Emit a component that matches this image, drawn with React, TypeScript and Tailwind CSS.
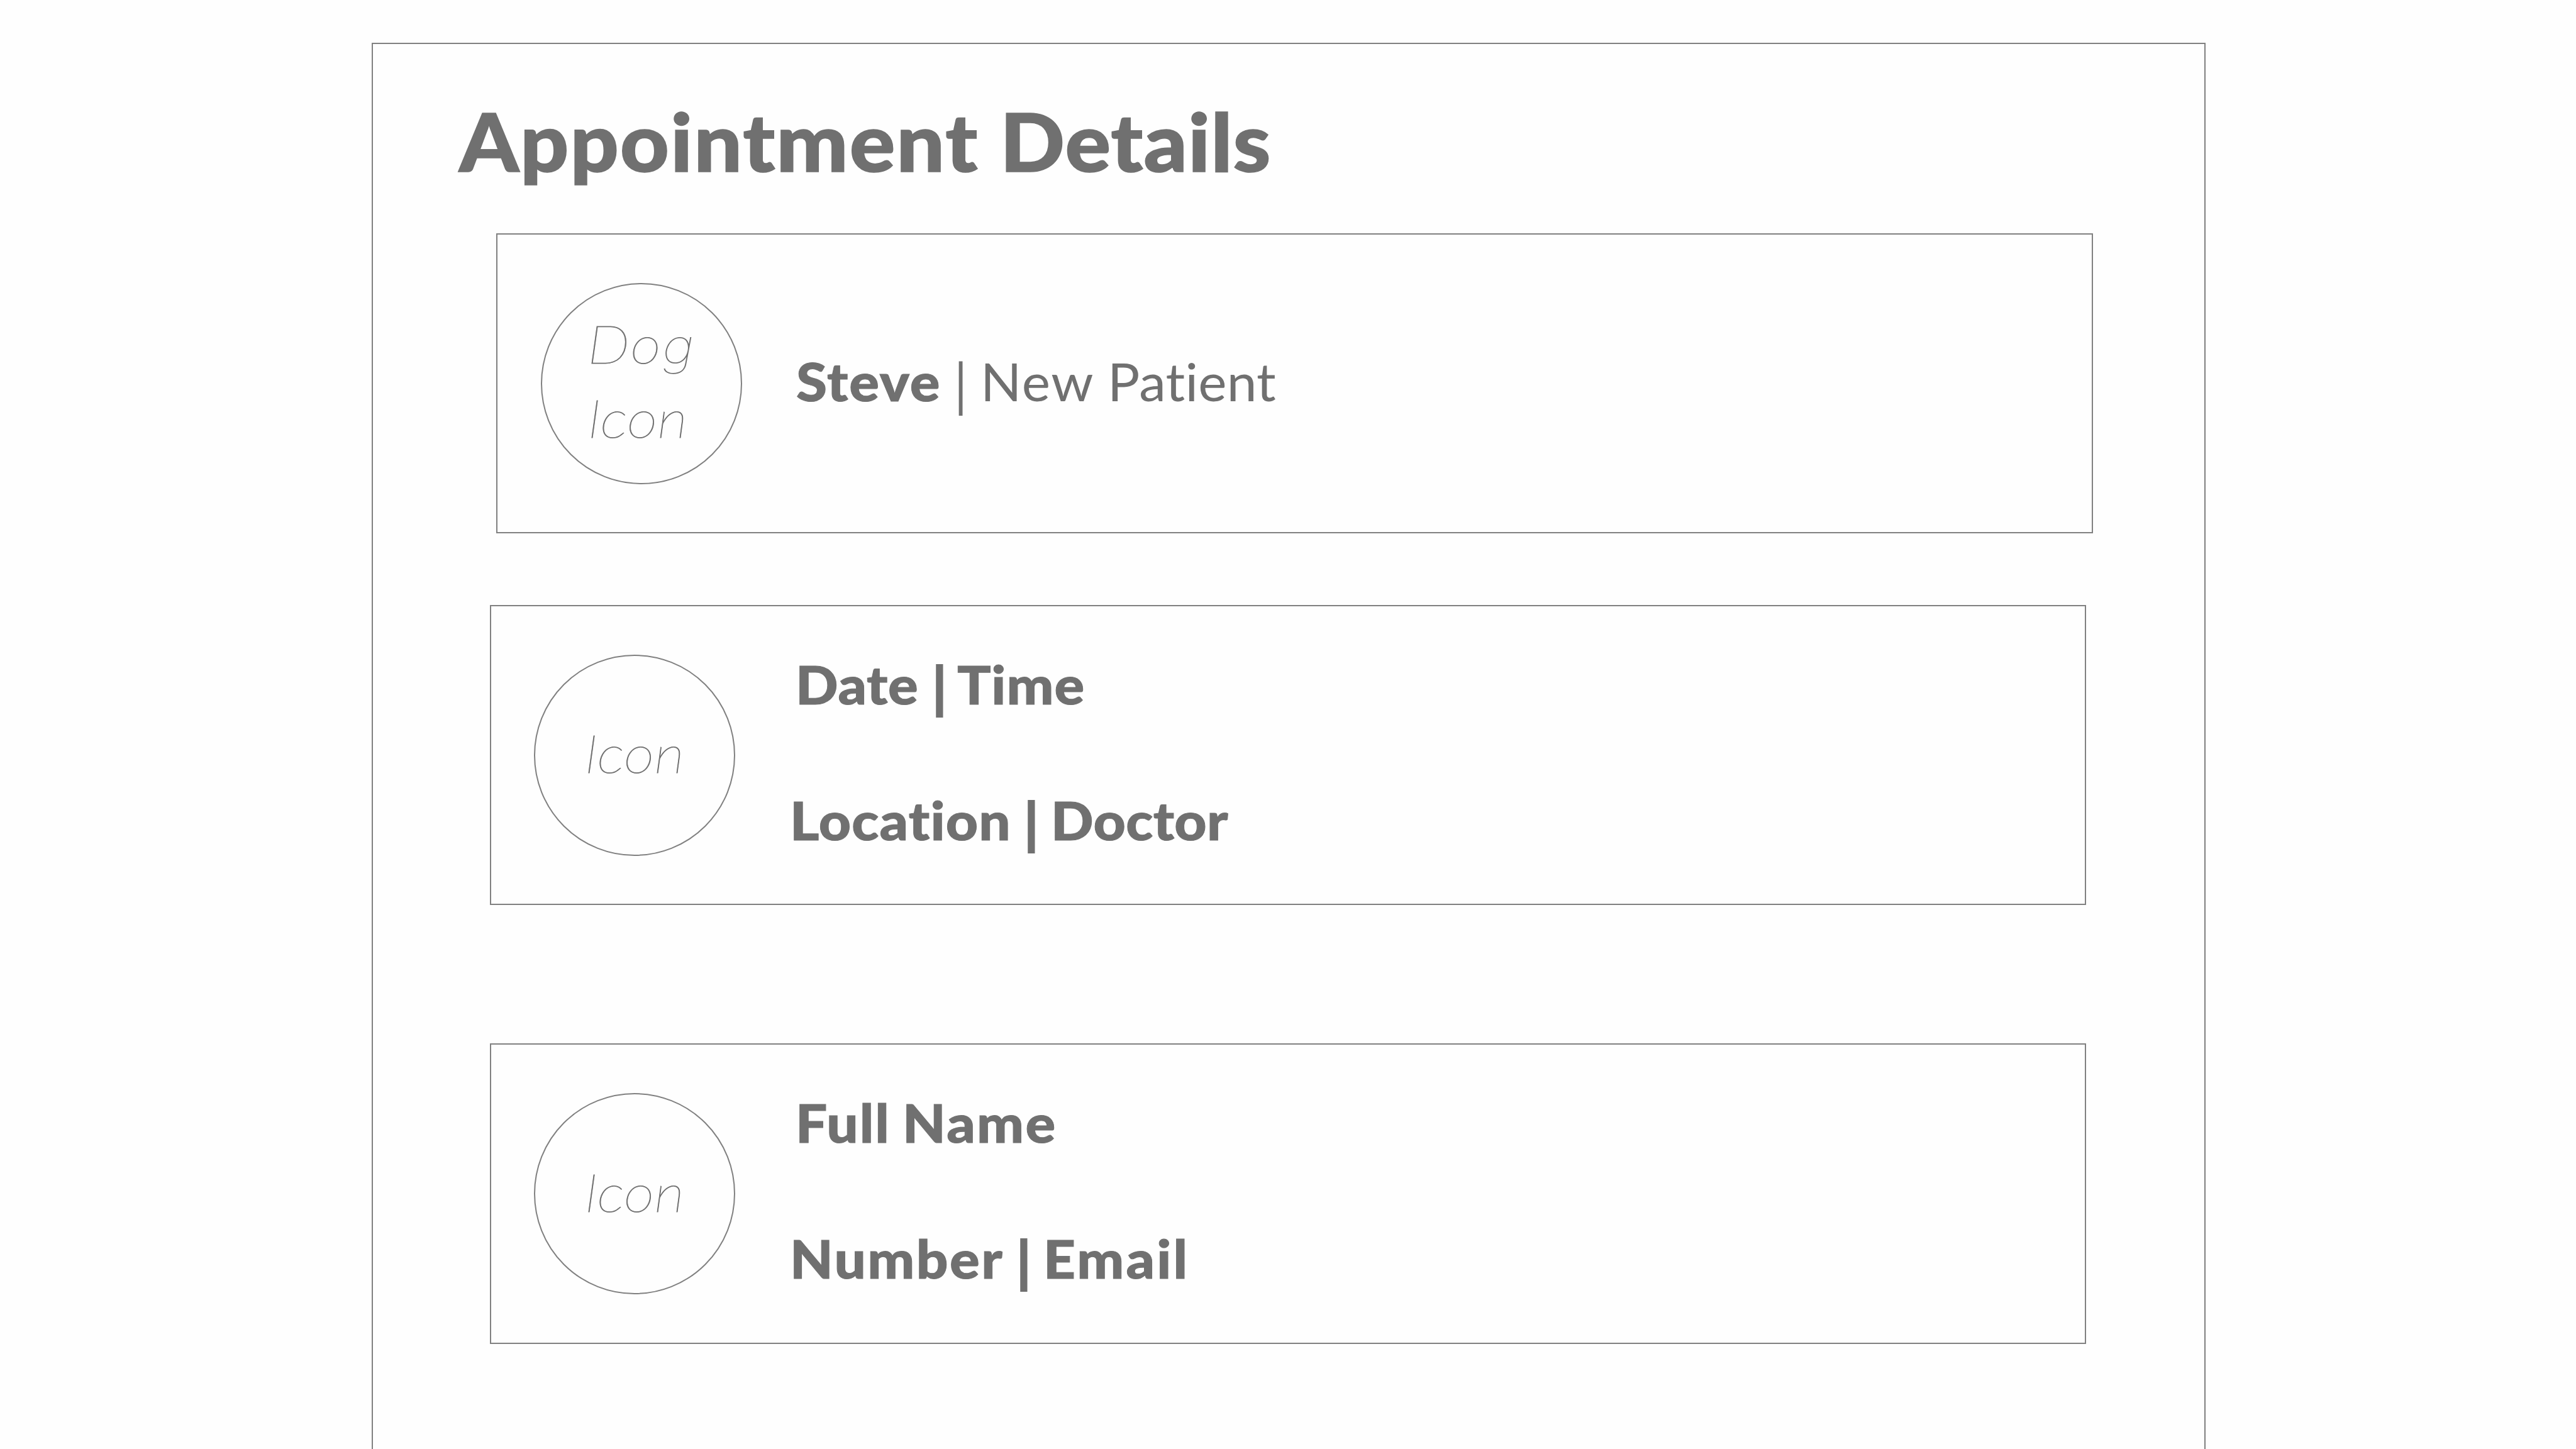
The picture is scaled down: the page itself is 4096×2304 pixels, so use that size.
import type { ReactNode } from "react";
import clsx from "clsx";

function Divider({ light, className }: { light?: boolean; className: string }) {
  return (
    <span
      className={clsx(
        "shrink-0 self-start font-['Open_Sans',sans-serif] text-[86px] leading-[102px] [-webkit-text-stroke:0px]",
        light ? "font-normal" : "font-extrabold",
        className
      )}
    >
      |
    </span>
  );
}

function Word({ children, className }: { children: ReactNode; className: string }) {
  return <span className={clsx("shrink-0 origin-left whitespace-nowrap", className)}>{children}</span>;
}

function Line({ children, className }: { children: ReactNode; className?: string }) {
  return (
    <p
      className={clsx(
        "flex h-[100px] items-baseline text-[84px] leading-[100px] font-black [-webkit-text-stroke:1px]",
        className
      )}
    >
      {children}
    </p>
  );
}

function IconCircle({ children, className }: { children: ReactNode; className: string }) {
  return (
    <div
      className={clsx(
        "flex size-[320px] shrink-0 flex-col justify-center rounded-full border-2 border-[#808080] text-[84px] font-thin italic",
        className
      )}
    >
      {children}
    </div>
  );
}

function Card({ icon, children, className }: { icon: ReactNode; children: ReactNode; className: string }) {
  return (
    <section className={clsx("flex items-center border-2 border-[#808080]", className)}>
      {icon}
      <div className="flex flex-col gap-[116px] self-start">{children}</div>
    </section>
  );
}

export default function App() {
  return (
    <div className="h-[2304px] w-[4096px] overflow-hidden bg-[#fefefe] pt-[68px] pl-[591px] font-['Lato',sans-serif] text-[#707070]">
      <main className="h-[2236px] w-[2916px] border-2 border-b-0 border-[#808080] pt-[77px]">
        <h1 className="ml-[137px] flex text-[128px] leading-[154px] font-black [-webkit-text-stroke:1.5px]">
          <Word className="w-[860px] scale-x-[1.06] tracking-[1.8px]">Appointment</Word>
          <Word className="scale-x-[1.06] tracking-[0.9px]">Details</Word>
        </h1>

        {/* Patient */}
        <Card
          className="mt-[70px] ml-[196px] h-[477px] w-[2539px] pl-[69px]"
          icon={
            <IconCircle className="mr-[86px] pb-[10px] pl-[72px] leading-[118px]">
              <span className="origin-left scale-x-[1.13] tracking-[2px] [-webkit-text-stroke:0.8px]">
                Do
                <span className="font-['Inter',sans-serif] text-[77px] leading-[1] [-webkit-text-stroke:0px]">g</span>
              </span>
              <span className="origin-left scale-x-[1.13] [-webkit-text-stroke:0.8px]">Icon</span>
            </IconCircle>
          }
        >
          <Line className="mt-[183px]">
            <Word className="w-[238px] scale-x-[1.06] tracking-[1.9px]">Steve</Word>
            <Divider light className="w-[55px]" />
            <Word className="w-[202px] scale-x-[1.02] font-normal tracking-[1.6px] [-webkit-text-stroke:0px]">
              New
            </Word>
            <Word className="scale-x-[1.02] font-normal tracking-[0.2px] [-webkit-text-stroke:0px]">Patient</Word>
          </Line>
        </Card>

        {/* Visit */}
        <Card
          className="mt-[114px] ml-[186px] h-[477px] w-[2538px] pl-[68px]"
          icon={
            <IconCircle className="mr-[87px] pb-[7px] pl-[78px] leading-[100px]">
              <span className="origin-left scale-x-[1.13] [-webkit-text-stroke:0.8px]">Icon</span>
            </IconCircle>
          }
        >
          <Line className="mt-[74px] ml-[9px]">
            <Word className="w-[207px] scale-x-[1.06] tracking-[0.7px]">Date</Word>
            <Divider className="w-[50px]" />
            <Word className="scale-x-[1.06] tracking-[0.9px]">Time</Word>
          </Line>
          <Line>
            <Word className="w-[362px] scale-x-[1.06] tracking-[1.1px]">Location</Word>
            <Divider className="w-[53px]" />
            <Word className="scale-x-[1.06] tracking-[0.3px]">Doctor</Word>
          </Line>
        </Card>

        {/* Contact */}
        <Card
          className="mt-[220px] ml-[186px] h-[478px] w-[2538px] pl-[68px]"
          icon={
            <IconCircle className="mr-[87px] pb-[7px] pl-[78px] leading-[100px]">
              <span className="origin-left scale-x-[1.13] [-webkit-text-stroke:0.8px]">Icon</span>
            </IconCircle>
          }
        >
          <Line className="mt-[74px] ml-[9px]">
            <Word className="w-[170px] scale-x-[1.06] tracking-[1.8px]">Full</Word>
            <Word className="scale-x-[1.06] tracking-[2.2px]">Name</Word>
          </Line>
          <Line>
            <Word className="w-[350px] scale-x-[1.06] tracking-[2.3px]">Number</Word>
            <Divider className="w-[53px]" />
            <Word className="scale-x-[1.06] tracking-[2.9px]">Email</Word>
          </Line>
        </Card>
      </main>
    </div>
  );
}
